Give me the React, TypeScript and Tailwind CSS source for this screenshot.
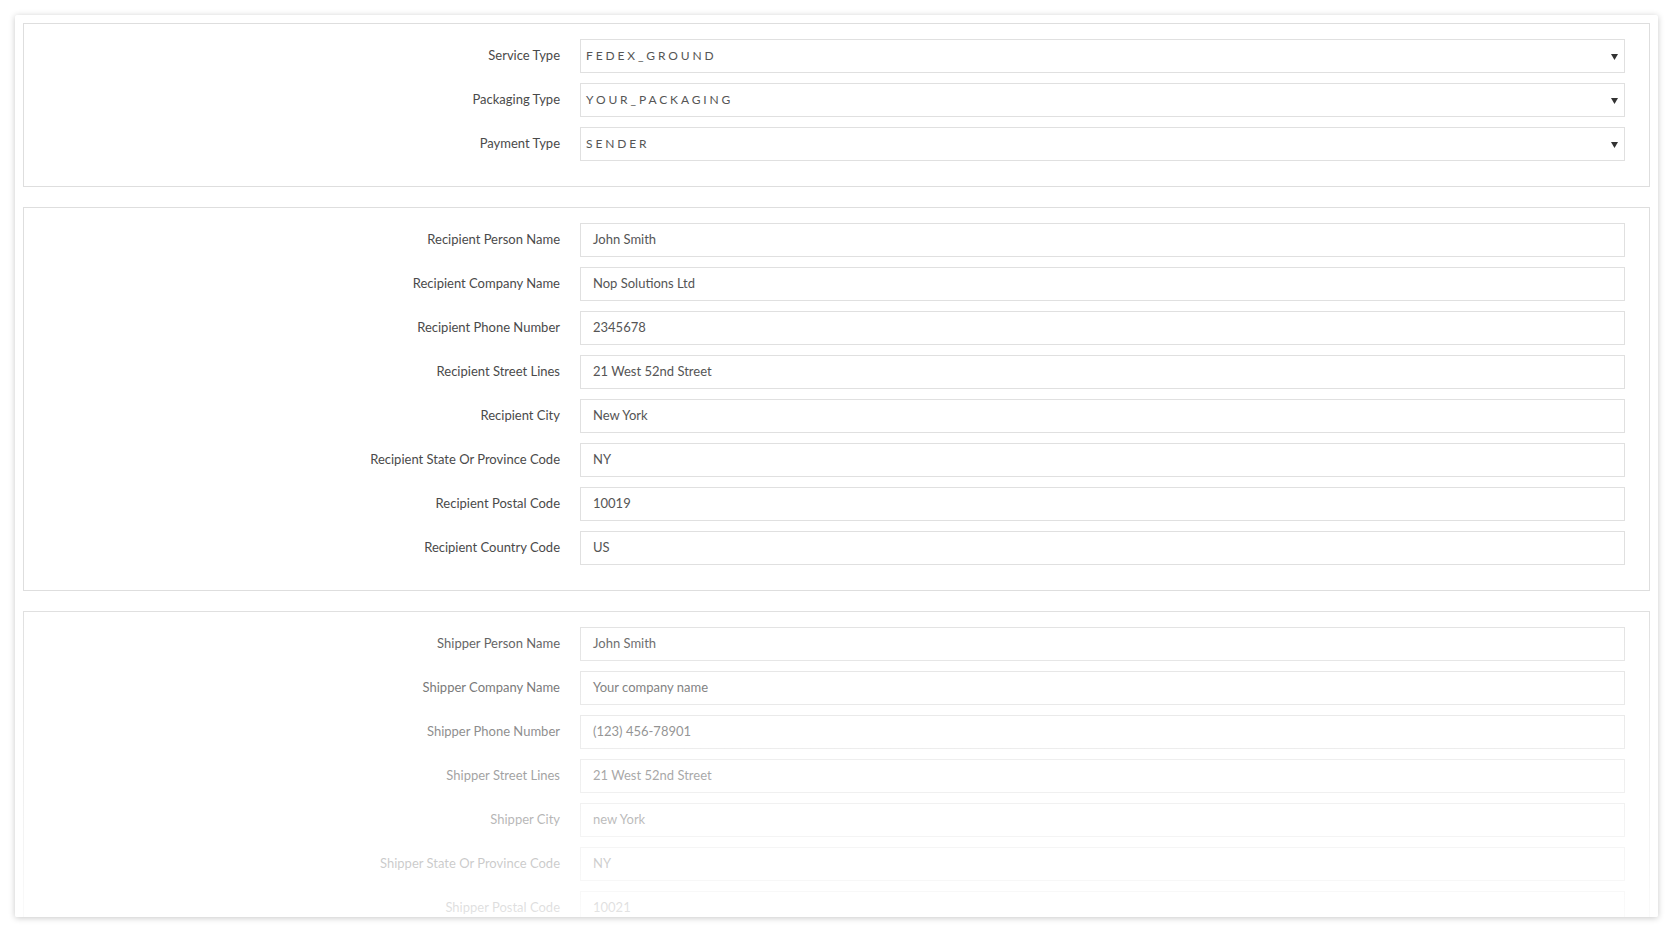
import React from "react";

type Row = { label: string; value: string; select?: boolean };

const SHIPPING: Row[] = [
  { label: "Service Type", value: "FEDEX_GROUND", select: true },
  { label: "Packaging Type", value: "YOUR_PACKAGING", select: true },
  { label: "Payment Type", value: "SENDER", select: true },
];

const RECIPIENT: Row[] = [
  { label: "Recipient Person Name", value: "John Smith" },
  { label: "Recipient Company Name", value: "Nop Solutions Ltd" },
  { label: "Recipient Phone Number", value: "2345678" },
  { label: "Recipient Street Lines", value: "21 West 52nd Street" },
  { label: "Recipient City", value: "New York" },
  { label: "Recipient State Or Province Code", value: "NY" },
  { label: "Recipient Postal Code", value: "10019" },
  { label: "Recipient Country Code", value: "US" },
];

const SHIPPER: Row[] = [
  { label: "Shipper Person Name", value: "John Smith" },
  { label: "Shipper Company Name", value: "Your company name" },
  { label: "Shipper Phone Number", value: "(123) 456-78901" },
  { label: "Shipper Street Lines", value: "21 West 52nd Street" },
  { label: "Shipper City", value: "new York" },
  { label: "Shipper State Or Province Code", value: "NY" },
  { label: "Shipper Postal Code", value: "10021" },
  { label: "Shipper Country Code", value: "US" },
];

function Field({ row }: { row: Row }) {
  return (
    <>
      <label className="flex items-center justify-end text-[13px] text-[#4a4a4a]">{row.label}</label>
      {row.select ? (
        <div className="flex h-[34px] items-center justify-between border border-[#e0e0e0] bg-white pl-[5px] pr-[6px]">
          <span className="text-[12px] uppercase tracking-[0.24em] text-[#555]">{row.value}</span>
          <svg width="7" height="6" viewBox="0 0 7 6" className="mt-[1px]">
            <path d="M0 0h7L3.5 6z" fill="#333" />
          </svg>
        </div>
      ) : (
        <div className="flex h-[34px] items-center border border-[#e0e0e0] bg-white px-3 text-[13px] text-[#555]">
          {row.value}
        </div>
      )}
    </>
  );
}

function Panel({ rows }: { rows: Row[] }) {
  return (
    <div className="border border-[#dedede] bg-white pt-[15px] pb-[25px] pr-[24px]">
      <div className="grid grid-cols-[536px_1fr] gap-x-5 gap-y-[10px]">
        {rows.map((r) => (
          <Field key={r.label} row={r} />
        ))}
      </div>
    </div>
  );
}

export default function App() {
  return (
    <div className="h-[932px] bg-white pt-[15px] pl-[15px] pr-[14px]" style={{ fontFamily: "Lato, 'Open Sans', sans-serif" }}>
      <div className="relative h-[902px] overflow-hidden rounded-[2px] bg-white p-2 shadow-[0_1px_6px_rgba(0,0,0,0.22)]">
        <div className="flex flex-col gap-5">
          <Panel rows={SHIPPING} />
          <Panel rows={RECIPIENT} />
          <Panel rows={SHIPPER} />
        </div>
        {/* faded lower part */}
        <div className="pointer-events-none absolute inset-x-0 top-[570px] bottom-0 bg-linear-to-b from-white/0 to-white/85" />
      </div>
    </div>
  );
}
